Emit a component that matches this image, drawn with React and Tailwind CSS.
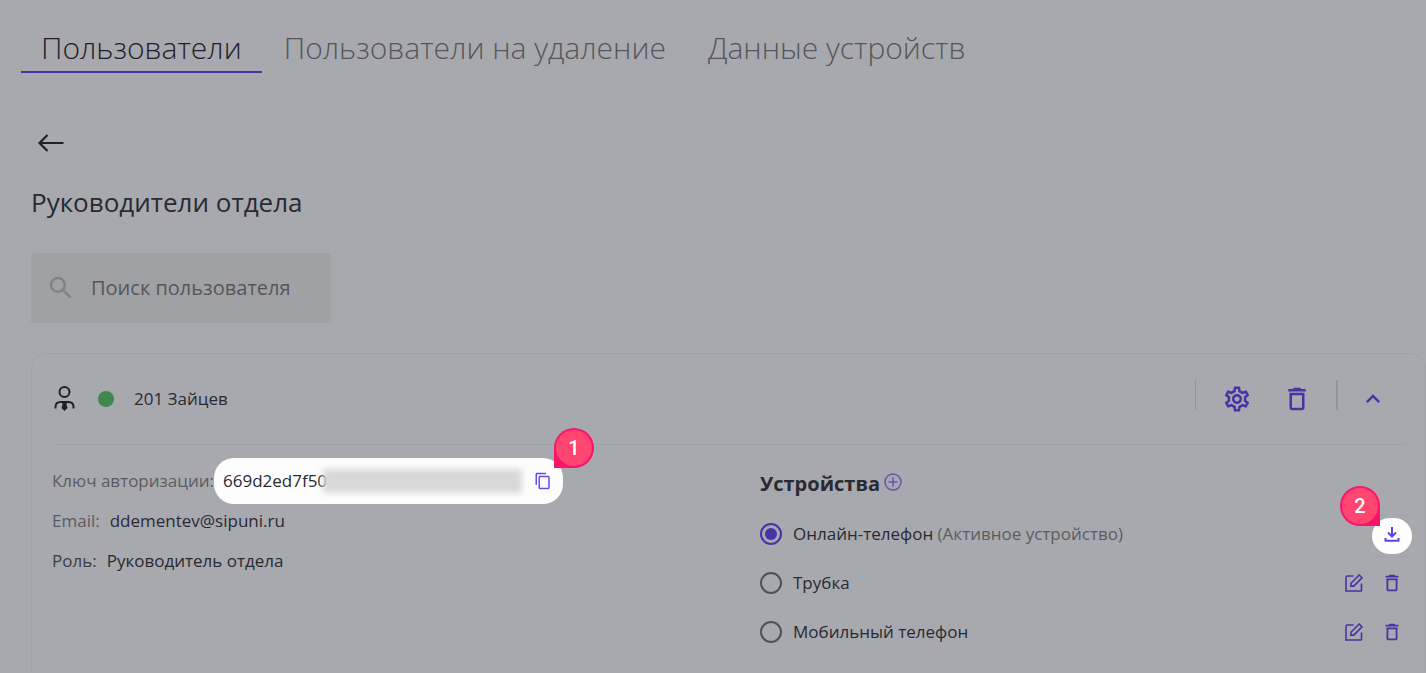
import { useState } from "react";
import { MdContentCopy, MdDeleteOutline, MdKeyboardArrowUp, MdOutlineSettings, MdSearch } from "react-icons/md";

const tabs = ["Пользователи", "Пользователи на удаление", "Данные устройств"];

const devices = [
  { id: "online", name: "Онлайн-телефон" },
  { id: "handset", name: "Трубка" },
  { id: "mobile", name: "Мобильный телефон" },
];

export default function App() {
  const [tab, setTab] = useState(tabs[0]);
  const [active, setActive] = useState("online");

  return (
    <div className="min-h-screen bg-[#a8a9ae] font-['Open_Sans','Noto_Sans',sans-serif] font-normal text-[#292a33] overflow-hidden">
      <nav className="flex gap-0.5 pl-[21px] pt-7">
        {tabs.map((t) => (
          <button
            key={t}
            onClick={() => setTab(t)}
            className={`px-5 pb-[3px] text-[30px] leading-10 font-light whitespace-nowrap border-b-2 ${t === tab ? "border-[#4733a5] text-[#1f2029]" : "border-transparent text-[#55565b]"}`}
          >
            {t}
          </button>
        ))}
      </nav>

      <main className="pl-[31px] pt-[51px]">
        <button aria-label="Назад" className="block p-1.5 text-[#1f2029]">
          <BackIcon />
        </button>
        <h1 className="mt-[22px] text-[26px] leading-9">Руководители отдела</h1>

        <label className="mt-[33px] flex h-[70px] w-[300px] items-center gap-[15px] rounded-t bg-[#a0a1a5] pl-[15px]">
          <MdSearch className="size-[30px] shrink-0 text-[#818286]" />
          <input
            type="text"
            placeholder="Поиск пользователя"
            aria-label="Поиск пользователя"
            className="w-full min-w-0 bg-transparent text-[20px] outline-none placeholder:text-[#55565b]"
          />
        </label>

        <section className="mt-[30px] rounded-t-2xl border border-b-0 border-[#a1a2a7] pl-5 pb-4">
          <header className="mr-[19px] flex h-[91px] items-center border-b border-[#a0a1a5]">
            <PersonIcon />
            <span className="ml-[22px] size-4 rounded-full bg-[#40874d]" />
            <span className="ml-5 text-[17px]">201 Зайцев</span>
            <div className="ml-auto flex items-center text-[#4733a5]">
              <span className="mb-2 h-[30px] w-px bg-[#949599]" />
              <button aria-label="Настройки" className="ml-[26px]"><MdOutlineSettings className="size-[30px]" /></button>
              <button aria-label="Удалить" className="ml-[30px]"><MdDeleteOutline className="size-[30px]" /></button>
              <span className="mb-2 ml-6 h-[30px] w-0.5 bg-[#949599]" />
              <button aria-label="Свернуть" className="ml-[21px] mr-[19px]"><MdKeyboardArrowUp className="size-7" /></button>
            </div>
          </header>

          <div className="grid grid-cols-2 pr-[13px] pt-[13px]">
            <div className="flex flex-col text-[17px] leading-10">
              <div className="flex h-[46px] items-center text-[#5b5c61]">
                <span className="whitespace-nowrap">Ключ авторизации:</span>
                <div className="relative flex h-[46px] w-[349px] items-center rounded-[20px] bg-[#fdfdfd] pl-[9px] pr-[11px] text-[#292a33]">
                  <span>669d2ed7f50</span>
                  <span className="-ml-1 h-6 grow bg-[#d8d8d8] blur-[3px]" />
                  <button aria-label="Скопировать" className="ml-3 text-[#6a47ee]"><MdContentCopy className="size-[18px]" /></button>
                  <Marker className="-top-[30px] -right-[31px] rounded-bl-none">1</Marker>
                </div>
              </div>
              <div className="-mt-[3px] flex gap-[10px]">
                <span className="text-[#5b5c61]">Email:</span>
                <span>ddementev@sipuni.ru</span>
              </div>
              <div className="flex gap-[10px]">
                <span className="text-[#3c3d44]">Роль:</span>
                <span>Руководитель отдела</span>
              </div>
            </div>

            <div className="pl-7">
              <div className="flex h-[51px] items-center gap-1">
                <h2 className="text-[20px] font-bold">Устройства</h2>
                <button aria-label="Добавить устройство" className="pb-1 text-[#6753b5]"><PlusIcon /></button>
              </div>
              {devices.map((d) => (
                <div key={d.id} className="flex h-[49px] items-center justify-between text-[17px]">
                  <label className="flex items-center gap-[11px]">
                    <input
                      type="radio"
                      name="device"
                      checked={active === d.id}
                      onChange={() => setActive(d.id)}
                      className="grid size-[22px] appearance-none place-items-center rounded-full border-2 border-[#505157] before:size-3 before:rounded-full checked:border-[#4733a5] checked:before:bg-[#4733a5]"
                    />
                    <span>
                      {d.name}
                      {active === d.id && <span className="text-[#5b5c61]"> (Активное устройство)</span>}
                    </span>
                  </label>
                  {d.id === "online" ? (
                    <div className="relative mt-1">
                      <button aria-label="Скачать" className="flex h-9 w-10 items-center justify-center rounded-[18px] bg-[#fdfdfd] pb-0.5 text-[#6041e8]">
                        <DownloadIcon />
                      </button>
                      <Marker className="-top-8 right-8 rounded-br-none">2</Marker>
                    </div>
                  ) : (
                    <div className="flex items-center gap-[18px] pr-[9px] text-[#4733a5]">
                      <button aria-label="Редактировать"><EditIcon /></button>
                      <button aria-label="Удалить"><MdDeleteOutline className="size-[22px]" /></button>
                    </div>
                  )}
                </div>
              ))}
            </div>
          </div>
        </section>
      </main>
    </div>
  );
}

function Marker({ className, children }) {
  return (
    <span className={`absolute size-10 rounded-full bg-[#f8156b] p-0.5 ${className}`}>
      <span className="flex size-9 items-center justify-center rounded-full bg-[#ff4570] font-[Roboto] text-xl font-medium text-white">{children}</span>
    </span>
  );
}

function BackIcon() {
  return (
    <svg width="28" height="26" viewBox="0 0 28 26" fill="none" stroke="currentColor" strokeWidth="2.2">
      <path d="M10.500 5 2.500 13l8 8M2.500 13H26.500" />
    </svg>
  );
}

function PersonIcon() {
  return (
    <svg width="24" height="26" viewBox="0 0 24 26" fill="none" stroke="#1f2029" strokeWidth="2">
      <circle cx="12.500" cy="6" r="5" />
      <path d="M3.500 22.500v-1.500c0-3 2-5 5-5h8c3 0 5 2 5 5v1.500" />
      <path d="M10 16h5l-.5 2.500L15.500 22l-3 3-3-3 1-3.500z" fill="#1f2029" stroke="none" />
    </svg>
  );
}

function PlusIcon() {
  return (
    <svg width="18" height="18" viewBox="0 0 18 18" fill="none" stroke="currentColor" strokeWidth="1.500">
      <circle cx="9" cy="9" r="8" />
      <path d="M9 4.500v9M4.500 9h9" />
    </svg>
  );
}

function DownloadIcon() {
  return (
    <svg width="16" height="16" viewBox="0 0 16 16" fill="none" stroke="currentColor" strokeWidth="2">
      <path d="M8 0v9M4 5.500l4 4 4-4" />
      <path d="M1.500 11v2.700h13V11" strokeLinejoin="round" />
    </svg>
  );
}

function EditIcon() {
  return (
    <svg width="18" height="18" viewBox="0 0 18 18" fill="none" stroke="currentColor" strokeWidth="1.600">
      <path d="M8.500 2H2.200Q1 2 1 3.200V17h14.800q.7 0 .7-.8V9.500" />
      <path d="M6 9.300 14.200 1l2.800 2.800-8.200 8.300H6z" />
    </svg>
  );
}
